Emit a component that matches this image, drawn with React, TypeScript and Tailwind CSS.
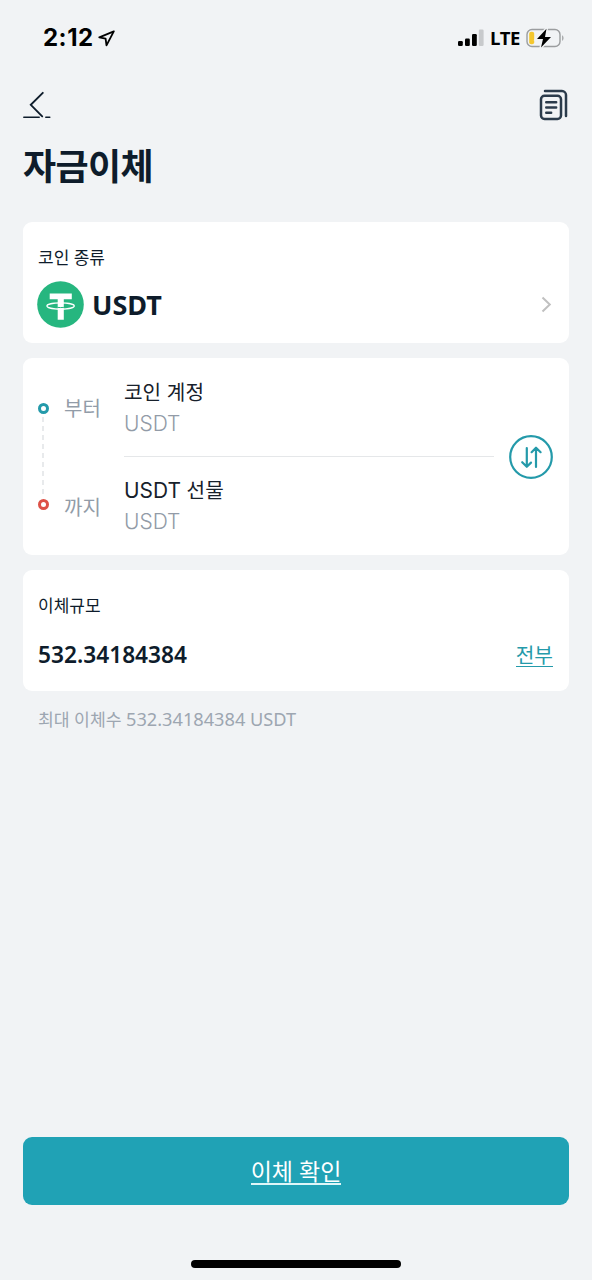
import type { ReactNode } from "react";

const Card = ({ className, children }: { className: string; children: ReactNode }) => (
  <section className={`w-full rounded-[9px] bg-white ${className}`}>{children}</section>
);

const StatusBar = () => (
  <div className="flex h-[76px] items-center justify-between pl-[43px] pr-[27px] text-black">
    <div className="flex items-center gap-[4px]">
      <span className="w-[51px] whitespace-nowrap font-['Inter',sans-serif] text-[24px] font-bold leading-none tracking-[0.5px]">2:12</span>
      <svg width="17" height="17" viewBox="0 0 17 17" fill="none" stroke="currentColor" strokeWidth="1.8" strokeLinejoin="round">
        <path d="M15.8 1.3 1.3 7.4l6.3 1.3.9 6.6z" />
      </svg>
    </div>
    <div className="flex items-center">
      <svg width="26" height="18" viewBox="0 0 26 18">
        <rect x="0" y="12" width="4.8" height="5" rx="1.2" />
        <rect x="7" y="9.5" width="4.8" height="7.5" rx="1.2" />
        <rect x="14" y="5" width="4.8" height="12" rx="1.2" />
        <rect x="20.8" y="0.5" width="4.8" height="16.5" rx="1.2" fill="#c8cacc" />
      </svg>
      <span className="ml-[6px] w-[36px] font-['Open_Sans',sans-serif] text-[18.5px] font-bold leading-none tracking-[-0.6px]">LTE</span>
      <svg width="39" height="20" viewBox="0 0 39 20" fill="none">
        <rect x="1" y="1.5" width="33" height="17" rx="5" stroke="#9b9d9f" strokeWidth="1.4" />
        <path d="M36.2 7.2c1.7.6 1.7 5 0 5.6z" fill="#9b9d9f" />
        <rect x="3.2" y="3.8" width="5" height="12.4" rx="2" fill="#f4c72f" />
        <path d="M20.5.8 11 11h6l-2 8.4L25 9h-6z" fill="#000" stroke="#f1f3f5" strokeWidth="3" paintOrder="stroke" />
      </svg>
    </div>
  </div>
);

const BackIcon = () => (
  <svg width="28" height="30" viewBox="0 0 28 30" fill="none" stroke="#0e1c2b" strokeLinecap="round">
    <path d="M19.8 2.8 7.8 14.8 19.2 26.4" strokeWidth="1.9" />
    <path d="M.8 27.3h15.4M22.8 27.3h4" strokeWidth="1.5" />
  </svg>
);

const RecordsIcon = () => (
  <svg width="30" height="32" viewBox="0 0 30 32" fill="none" stroke="#2b3b4b" strokeWidth="2.5" strokeLinecap="round">
    <rect x="2" y="6.8" width="20" height="23.2" rx="3.5" />
    <path d="M6 2.1h17a4 4 0 0 1 4 4V27" />
    <path d="M7.2 13.3h10M7.2 18.5h10M7.2 23.7h5" strokeWidth="2.4" />
  </svg>
);

const TetherLogo = () => (
  <svg width="47" height="47" viewBox="0 0 47 47">
    <circle cx="23.5" cy="23.5" r="23.3" fill="#26b67f" />
    <path d="M12.7 12.6h22.1v5.7h-8v20.4h-6.1V18.3h-8z" fill="#fff" />
    <ellipse cx="23.6" cy="25" rx="13.7" ry="3.1" fill="none" stroke="#fff" strokeWidth="1.2" />
    <path d="M20.4 26.4c2 .2 4.3.2 6.5 0" stroke="#26b67f" strokeWidth="1" fill="none" />
  </svg>
);

const SwapIcon = () => (
  <svg width="44" height="44" viewBox="0 0 44 44" fill="none" stroke="#249aaa" strokeWidth="2.2" strokeLinecap="round" strokeLinejoin="round">
    <circle cx="22" cy="22" r="20.8" />
    <path d="M17.8 13v18.6M13.2 27.2l4.6 4.6 4.2-4.2M27 32V13.2M22.6 17.2l4.4-4.5 4.6 4.5" />
  </svg>
);

type AccountRowProps = {
  name: ReactNode;
  coin: string;
};

const AccountRow = ({ name, coin }: AccountRowProps) => (
  <div className="flex flex-col whitespace-nowrap">
    <span className="text-[20.2px] leading-[31px] text-[#17212b]">{name}</span>
    <span className="text-[21px] font-light leading-[31px] text-[#929ba7]">{coin}</span>
  </div>
);

export default function App() {
  return (
    <main className="flex h-[1280px] w-[592px] flex-col overflow-hidden bg-[#f1f3f5] font-['Noto_Sans','Noto_Sans_CJK_KR',sans-serif] text-[#0e1c2b]">
      <StatusBar />
      <div className="flex flex-1 flex-col px-[23px]">
        <header className="flex h-[58px] items-center justify-between">
          <button aria-label="뒤로"><BackIcon /></button>
          <button aria-label="기록"><RecordsIcon /></button>
        </header>
        <h1 className="h-[88px] whitespace-nowrap text-[36px] font-bold leading-[66px] tracking-[-0.6px]">자금이체</h1>

        <Card className="h-[121px] px-[15px] pt-[23px]">
          <div className="text-[17px] leading-[25px]">코인 종류</div>
          <div className="-ml-px mt-[11px] flex items-center">
            <TetherLogo />
            <span className="ml-[8px] text-[27px] font-bold leading-[40px]">USDT</span>
            <svg className="ml-auto mr-[2px]" width="11" height="17" viewBox="0 0 11 17" fill="none" stroke="#c0c0c0" strokeWidth="2">
              <path d="m1.5 1.5 7.3 7-7.3 7" />
            </svg>
          </div>
        </Card>

        <Card className="mt-[15px] flex h-[197px] pl-[15px] pr-[16px]">
          <div className="flex w-[11px] flex-col items-center pt-[45px]">
            <span className="size-[11px] shrink-0 rounded-full border-[3px] border-[#249aaa]" />
            <svg className="-ml-[2px]" width="2" height="85" viewBox="0 0 2 85">
              <path d="M1 3v80" stroke="#e3e5e8" strokeWidth="1.6" strokeDasharray="5 4" />
            </svg>
            <span className="size-[11px] shrink-0 rounded-full border-[3px] border-[#dd5147]" />
          </div>
          <div className="ml-[15px] flex w-[60px] flex-col pt-[36px] text-[20px] leading-[30px] text-[#929ca8]">
            <span>부터</span>
            <span className="mt-[69px]">까지</span>
          </div>
          <div className="flex w-[370px] flex-col pt-[19px] font-['Inter','Noto_Sans_CJK_KR',sans-serif]">
            <AccountRow name="코인 계정" coin="USDT" />
            <hr className="mb-[18px] mt-[17px] border-[#e5e7e9]" />
            <AccountRow name={<><span className="text-[20.9px]">USDT</span> 선물</>} coin="USDT" />
          </div>
          <button className="ml-auto self-center" aria-label="바꾸기"><SwapIcon /></button>
        </Card>

        <Card className="mt-[15px] h-[121px] px-[15px] pt-[23px]">
          <div className="text-[17px] leading-[25px]">이체규모</div>
          <div className="mt-[20px] flex items-center justify-between">
            <span className="text-[22.7px] font-semibold leading-[34px]">532.34184384</span>
            <a className="mr-px border-b border-[#249aaa] text-[20.3px] leading-[22px] text-[#249aaa]">전부</a>
          </div>
        </Card>
        <p className="mt-[14px] whitespace-nowrap pl-[15px] text-[17.2px] leading-[28px] text-[#9da6b1]">
          최대 이체수 <span className="text-[18.2px]">532.34184384 USDT</span>
        </p>

        <button className="mb-[75px] mt-auto flex h-[68px] items-center justify-center rounded-[9px] bg-[#20a2b5] text-white">
          <span className="mt-[2px] border-b-2 border-[#dff6f8] text-[23px] leading-[24px]">이체 확인</span>
        </button>
      </div>
      {/* home indicator */}
      <div className="absolute left-[191px] top-[1260px] h-[8px] w-[210px] rounded-full bg-black" />
    </main>
  );
}
